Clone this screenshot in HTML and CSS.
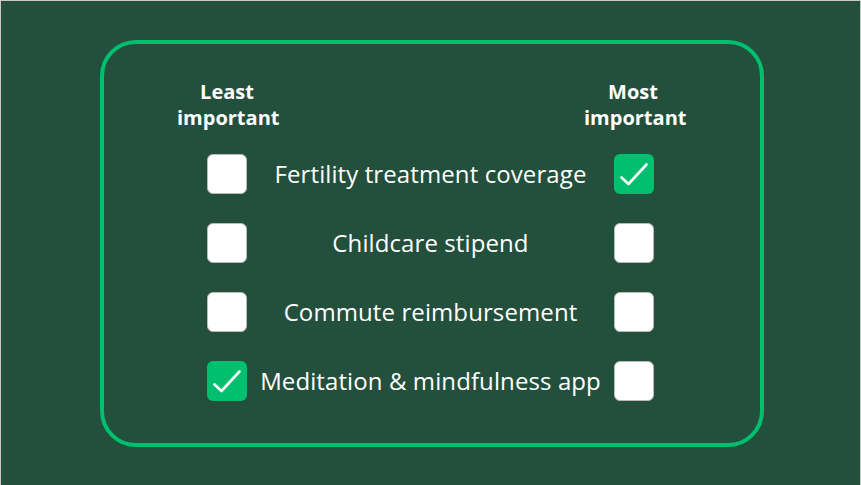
FILE: index.html
```html
<!DOCTYPE html>
<html lang="en">
<head>
<meta charset="utf-8">
<title>MaxDiff</title>
<link rel="stylesheet" href="styles.css">
</head>
<body>
<div class="frame">
  <div class="card">
    <div class="grid">
      <div class="head">Least<br>important</div>
      <div class="spacer"></div>
      <div class="head head-right">Most<br>important</div>

      <div class="cell"><span class="box"></span></div>
      <div class="label">Fertility treatment coverage</div>
      <div class="cell"><span class="box checked"><svg viewBox="0 0 40 40" width="40" height="40"><path d="M7.5 23.5 L14.5 30 L32.5 10.5" fill="none" stroke="#fff" stroke-width="2.6" stroke-linecap="round" stroke-linejoin="round"/></svg></span></div>

      <div class="cell"><span class="box"></span></div>
      <div class="label">Childcare stipend</div>
      <div class="cell"><span class="box"></span></div>

      <div class="cell"><span class="box"></span></div>
      <div class="label">Commute reimbursement</div>
      <div class="cell"><span class="box"></span></div>

      <div class="cell"><span class="box checked"><svg viewBox="0 0 40 40" width="40" height="40"><path d="M7.5 23.5 L14.5 30 L32.5 10.5" fill="none" stroke="#fff" stroke-width="2.6" stroke-linecap="round" stroke-linejoin="round"/></svg></span></div>
      <div class="label">Meditation &amp; mindfulness app</div>
      <div class="cell"><span class="box"></span></div>
    </div>
  </div>
</div>
</body>
</html>
```

FILE: styles.css
```css
* { box-sizing: border-box; }
html, body { margin: 0; padding: 0; }
body {
  width: 861px;
  height: 485px;
  background: #234f3d;
  font-family: "Open Sans", "Liberation Sans", sans-serif;
  color: #ffffff;
  overflow: hidden;
}
.frame {
  width: 861px;
  height: 485px;
  border: 1px solid #c8c8c8;
  border-bottom: none;
  padding: 39px 0 0 99px;
}
.card {
  width: 664px;
  height: 407px;
  border: 4px solid #00bf6f;
  border-radius: 36px;
  padding: 35px 76px 0 73px;
}
.grid {
  display: grid;
  grid-template-columns: 100px minmax(0, 1fr) 100px;
  grid-template-rows: 46px repeat(4, 40px);
  row-gap: 29px;
}
.head {
  text-align: center;
  font-weight: 700;
  font-size: 20px;
  line-height: 26px;
  height: 52px;
  white-space: nowrap;
}
.head-right { padding-right: 2px; }
.cell {
  display: flex;
  align-items: center;
  justify-content: center;
}
.box {
  display: block;
  width: 40px;
  height: 40px;
  background: #ffffff;
  border: 1px solid #b9b9b9;
  border-radius: 6px;
}
.box.checked {
  background: #00bf6f;
  border: none;
}
.box svg { display: block; }
.label {
  display: flex;
  align-items: center;
  justify-content: center;
  white-space: nowrap;
  font-size: 24px;
  font-weight: 400;
  letter-spacing: 0.1px;
  padding-bottom: 1px;
}
```
